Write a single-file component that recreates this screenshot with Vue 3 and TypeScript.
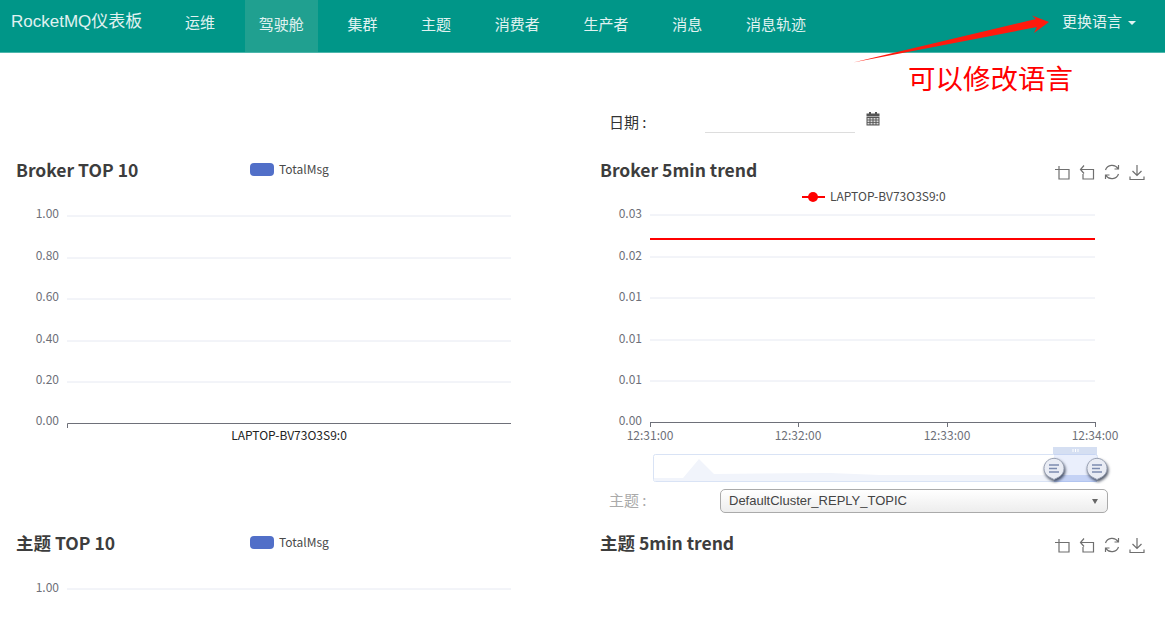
<script setup lang="ts">
const navItems = ['运维', '驾驶舱', '集群', '主题', '消费者', '生产者', '消息', '消息轨迹']
const activeNav = '驾驶舱'

// left charts share the same value scale
const topTicks = ['1.00', '0.80', '0.60', '0.40', '0.20', '0.00']
const topY = [216, 258, 299, 341, 382, 423]

const trendTicks = ['0.03', '0.02', '0.01', '0.01', '0.01', '0.00']
const trendY = [215, 257, 298, 340, 381, 422]
const trendTimes = [
  { x: 650, label: '12:31:00' },
  { x: 798, label: '12:32:00' },
  { x: 947, label: '12:33:00' },
  { x: 1095, label: '12:34:00' },
]

const handles = [1054, 1097]

// crop, undo, restore, save
const toolPaths = [
  'M2 6.500H16V16H6V3',
  'M6 2.500L2.500 6.500L6 10.500M2.500 6.500H15.500V16H5V11',
  'M2.500 7A7 7 0 0 1 15 5.500M15.500 11A7 7 0 0 1 3 12.500M15.500 2V6H11.500M2.500 16V12H6.500',
  'M9 2V12.500M4.500 8L9 12.500L13.500 8M2 13.500V16.500H16V13.500',
]
</script>

<template>
  <div class="page">
    <header class="navbar">
      <a class="brand">RocketMQ仪表板</a>
      <ul class="nav">
        <li
          v-for="(item, i) in navItems"
          :key="item"
          :class="{ active: item === activeNav, raised: i === 0 }"
        >
          {{ item }}
        </li>
      </ul>
      <div class="lang">更换语言<span class="caret"></span></div>
    </header>

    <main class="board">
      <div class="spacer"></div>
      <div class="date-row">
        <label class="date-label">日期 :</label>
        <div class="date-input"></div>
        <svg class="calendar" width="14" height="14" viewBox="0 0 14 14">
          <rect x="3" y="0" width="2" height="3" fill="#555" />
          <rect x="9" y="0" width="2" height="3" fill="#555" />
          <rect x="0.5" y="1.5" width="13" height="3" fill="#555" />
          <rect x="0.5" y="5" width="13" height="8.5" fill="#555" />
          <g fill="#d8d8d8">
            <rect v-for="n in 4" :key="'a' + n" :x="n * 3 - 1.5" y="6" width="2" height="1.6" />
            <rect v-for="n in 4" :key="'b' + n" :x="n * 3 - 1.5" y="8.4" width="2" height="1.6" />
            <rect v-for="n in 4" :key="'c' + n" :x="n * 3 - 1.5" y="10.8" width="2" height="1.6" />
          </g>
        </svg>
      </div>

      <!-- Broker TOP 10 -->
      <section class="chart chart-tall">
        <div class="chart-head">
          <h3>Broker TOP 10</h3>
          <span class="legend-box"></span>
          <span class="legend-text">TotalMsg</span>
        </div>
        <svg class="plot" width="583" height="345" viewBox="0 184 583 345">
          <g v-for="(t, i) in topTicks" :key="i">
            <line v-if="i < 5" x1="67" x2="511" :y1="topY[i]" :y2="topY[i]" class="grid" />
            <text x="59" :y="topY[i] + 2" class="tick" text-anchor="end">{{ t }}</text>
          </g>
          <path d="M67.500 428V423.500H511" class="axis" />
          <text x="289" y="440" class="cat" text-anchor="middle">LAPTOP-BV73O3S9:0</text>
        </svg>
      </section>

      <!-- Broker 5min trend -->
      <section class="chart chart-tall">
        <div class="chart-head right">
          <h3>Broker 5min trend</h3>
          <div class="tools">
            <svg v-for="d in toolPaths" :key="d" width="18" height="18" viewBox="0 0 18 18" class="tool">
              <path :d="d" />
            </svg>
          </div>
        </div>
        <svg class="plot" width="582" height="300" viewBox="583 184 582 300">
          <line x1="802" x2="825" y1="197" y2="197" stroke="#f00" stroke-width="2" />
          <circle cx="813" cy="197" r="5" fill="#f00" />
          <text x="830" y="201" class="tick dark">LAPTOP-BV73O3S9:0</text>

          <g v-for="(t, i) in trendTicks" :key="i">
            <line v-if="i < 5" x1="650" x2="1095" :y1="trendY[i]" :y2="trendY[i]" class="grid" />
            <text x="642" :y="trendY[i] + 3" class="tick" text-anchor="end">{{ t }}</text>
          </g>
          <line x1="650" x2="1095" y1="239" y2="239" stroke="#f00" stroke-width="2" />
          <path d="M650 422.500H1095" class="axis" />
          <g v-for="t in trendTimes" :key="t.x">
            <line :x1="t.x + 0.5" :x2="t.x + 0.5" y1="422" y2="427" class="axis" />
            <text :x="t.x" y="440" class="tick" text-anchor="middle">{{ t.label }}</text>
          </g>

          <!-- dataZoom -->
          <rect x="653.500" y="454.500" width="444" height="27" rx="2" fill="#fff" stroke="#d9e3f5" />
          <path
            d="M654 478H683L699 459L714 474L830 473L880 475L1097 475V481H654Z"
            fill="#f1f4fb"
          />
          <rect x="1054" y="454" width="43" height="28" fill="#2f62e0" opacity="0.1" />
          <rect x="1054" y="475" width="43" height="7" fill="#2f62e0" opacity="0.14" />
          <rect x="1053" y="447" width="44" height="7" fill="#d5dff2" />
          <path d="M1073 449v3M1075.500 449v3M1078 449v3" stroke="#fff" />
          <g v-for="h in handles" :key="h" class="handle">
            <path
              :d="`M${h} 479.500 L${h - 4} 477.500 A10 10 0 1 1 ${h + 4} 477.500 Z`"
              fill="#e9ecf4"
              stroke="#9aa2b4"
            />
            <path :d="`M${h - 5} 465H${h + 5}M${h - 5} 468.500H${h + 3}M${h - 5} 472H${h + 5}`" stroke="#7c8bae" stroke-width="1.500" />
          </g>
        </svg>
        <div class="topic-row">
          <label class="topic-label">主题 :</label>
          <div class="select">DefaultCluster_REPLY_TOPIC<span class="select-caret"></span></div>
        </div>
      </section>

      <!-- 主题 TOP 10 -->
      <section class="chart">
        <div class="chart-head">
          <h3>主题 TOP 10</h3>
          <span class="legend-box"></span>
          <span class="legend-text">TotalMsg</span>
        </div>
        <svg class="plot" width="583" height="72" viewBox="0 557 583 72">
          <line x1="67" x2="511" y1="589" y2="589" class="grid" />
          <text x="59" y="592" class="tick" text-anchor="end">1.00</text>
        </svg>
      </section>

      <!-- 主题 5min trend -->
      <section class="chart">
        <div class="chart-head right">
          <h3>主题 5min trend</h3>
          <div class="tools">
            <svg v-for="d in toolPaths" :key="d" width="18" height="18" viewBox="0 0 18 18" class="tool">
              <path :d="d" />
            </svg>
          </div>
        </div>
      </section>
    </main>

    <!-- annotation drawn over the screenshot -->
    <svg class="arrow" width="220" height="60" viewBox="0 0 220 60">
      <path d="M0 49.500L183 6L179 2.500L196 9L181 20L184 14Z" fill="#ff1a0d" />
    </svg>
    <div class="note">可以修改语言</div>
  </div>
</template>

<style>
html,
body {
  margin: 0;
  background: #fff;
}
</style>

<style scoped>
.page {
  position: relative;
  width: 1165px;
  height: 629px;
  overflow: hidden;
  font-family: "Noto Sans CJK SC", "Noto Sans", sans-serif;
  color: #333;
}

.navbar {
  display: flex;
  height: 52px;
  background: #009688;
  border-bottom: 1px solid #4db6ac;
  color: #e0f2f1;
  font-size: 15px;
}

.brand {
  width: 171px;
  box-sizing: border-box;
  padding-left: 11px;
  font: 17px/44px "Liberation Sans", "Noto Sans CJK SC", sans-serif;
}

.nav {
  display: flex;
  gap: 15.7px;
  margin: 0;
  padding: 0;
  list-style: none;
}

.nav li {
  padding: 0 14px;
  line-height: 47px;
}

.nav li.raised {
  line-height: 44px;
}

.nav li.active {
  background: #20a090;
}

.lang {
  margin-left: auto;
  padding-right: 29px;
  line-height: 41px;
}

.caret {
  display: inline-block;
  margin-left: 6px;
  vertical-align: 2px;
  border-top: 4px solid #e0f2f1;
  border-left: 4px solid transparent;
  border-right: 4px solid transparent;
}

.board {
  display: grid;
  grid-template-columns: 583px 582px;
}

.date-row {
  display: flex;
  height: 103px;
  box-sizing: border-box;
  padding-left: 26px;
}

.date-label {
  margin-top: 58px;
  width: 96px;
  font-size: 15px;
  line-height: 22px;
}

.date-input {
  width: 150px;
  height: 80px;
  box-sizing: border-box;
  border-bottom: 1px solid #ddd;
}

.calendar {
  margin: 59px 0 0 11px;
}

.chart-tall {
  height: 373px;
}

.chart-head {
  display: flex;
  align-items: center;
  height: 28px;
  box-sizing: border-box;
  padding-left: 16px;
  padding-bottom: 2px;
}

.chart-head.right {
  padding-left: 17px;
}

.chart-head h3 {
  margin: 0;
  width: 234px;
  font-size: 17.5px;
  font-weight: 700;
  color: #3d3d3d;
  white-space: nowrap;
}

.legend-box {
  width: 24px;
  height: 13px;
  border-radius: 4px;
  background: #516fc8;
}

.legend-text {
  margin-left: 5px;
  margin-top: -2px;
  font-size: 12px;
  color: #4a4a4a;
}

.tools {
  display: flex;
  gap: 7px;
  margin-left: auto;
  margin-top: 6px;
  padding-right: 19px;
}

.tool {
  fill: none;
  stroke: #6f6f6f;
  stroke-width: 1.2;
}

.plot {
  display: block;
}

.grid {
  stroke: #e6e9f2;
  stroke-width: 1;
}

.axis {
  fill: none;
  stroke: #6e7079;
  stroke-width: 1;
}

.tick {
  font-size: 12px;
  fill: #6e7079;
}

.tick.dark {
  fill: #4a4a4a;
}

.cat {
  font-size: 12px;
  fill: #222;
}

.handle {
  filter: drop-shadow(1px 2px 1.5px rgba(30, 40, 60, 0.8));
}

.topic-row {
  display: flex;
  align-items: center;
  height: 24px;
  margin-top: 5px;
  padding-left: 26px;
}

.topic-label {
  width: 111px;
  margin-bottom: 3px;
  font-size: 15px;
  color: #aaa;
}

.select {
  position: relative;
  width: 388px;
  height: 24px;
  box-sizing: border-box;
  padding-left: 8px;
  border: 1px solid #aaa;
  border-radius: 5px;
  background: linear-gradient(#fff, #ededed);
  font: 13px/22px "Liberation Sans", sans-serif;
  color: #444;
}

.select-caret {
  position: absolute;
  top: 9px;
  right: 9px;
  border-top: 5px solid #666;
  border-left: 3px solid transparent;
  border-right: 3px solid transparent;
}

.arrow {
  position: absolute;
  left: 853px;
  top: 13px;
}

.note {
  position: absolute;
  left: 908px;
  top: 57px;
  font-size: 27.5px;
  line-height: 40px;
  color: #ff0000;
  white-space: nowrap;
}
</style>
